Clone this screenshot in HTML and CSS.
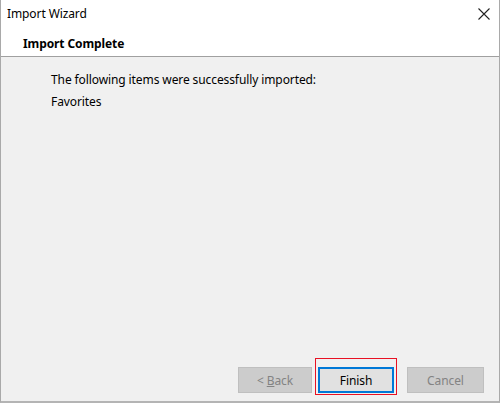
FILE: index.html
```html
<!DOCTYPE html>
<html>
<head>
<meta charset="utf-8">
<link rel="stylesheet" href="styles.css">
</head>
<body>
<div class="window">
  <div class="header">
    <div class="titlebar">
      <span class="title">Import Wizard</span>
      <svg class="close" width="12" height="12" viewBox="0 0 12 12"><path d="M0.5 0.5 L11.5 11.5 M11.5 0.5 L0.5 11.5" stroke="#222" stroke-width="1.1" fill="none"/></svg>
    </div>
    <div class="heading">Import Complete</div>
  </div>
  <div class="content">
    <p class="line">The following items were successfully imported:</p>
    <p class="line">Favorites</p>
  </div>
  <div class="footer">
    <button class="btn disabled">&lt; <u>B</u>ack</button>
    <div class="finish-wrap">
      <button class="btn primary">Finish</button>
      <span class="highlight"></span>
    </div>
    <button class="btn disabled cancel">Cancel</button>
  </div>
</div>
</body>
</html>
```

FILE: styles.css
```css
html, body {
  margin: 0;
  padding: 0;
  background: #f0f0f0;
}
body {
  font-family: "Noto Sans", "Open Sans", sans-serif;
  font-size: 12px;
  letter-spacing: -0.1px;
  color: #000;
}
.window {
  width: 500px;
  height: 403px;
  box-sizing: border-box;
  border-left: 1px solid #a9a9a9;
  border-right: 1px solid #a9a9a9;
  border-bottom: 2px solid #b4b4b4;
  display: flex;
  flex-direction: column;
  background: #f0f0f0;
}
.header {
  background: #fff;
  height: 56px;
  border-bottom: 1px solid #a0a0a0;
  flex: none;
}
.titlebar {
  height: 28px;
  display: flex;
  align-items: center;
  justify-content: space-between;
  padding: 0 9px 0 6px;
}
.title {
  font-size: 12px;
  line-height: 16px;
}
.close {
  display: block;
}
.heading {
  padding-left: 22px;
  font-weight: bold;
  font-size: 12px;
  line-height: 16px;
  margin-top: 8px;
}
.content {
  flex: 1;
  padding: 15px 0 0 50px;
}
.line {
  margin: 0 0 6px;
  line-height: 16px;
}
.footer {
  display: flex;
  align-items: center;
  padding: 0 14px 7px 237px;
  height: 35px;
  box-sizing: border-box;
  flex: none;
}
.btn {
  font-family: "Noto Sans", "Open Sans", sans-serif;
  font-size: 12px;
  letter-spacing: -0.1px;
  height: 26px;
  box-sizing: border-box;
  padding: 0;
  margin: 0;
}
.disabled {
  width: 74px;
  background: #cccccc;
  border: 1px solid #bfbfbf;
  color: #838383;
}
.disabled u {
  text-decoration: underline;
}
.finish-wrap {
  position: relative;
  margin-left: 6px;
}
.primary {
  display: block;
  width: 76px;
  background: #e1e1e1;
  border: 2px solid #0078d7;
  color: #000;
}
.highlight {
  position: absolute;
  left: -3px;
  top: -9px;
  width: 82px;
  height: 37px;
  border: 1px solid #e81123;
  box-sizing: border-box;
}
.cancel {
  margin-left: 13px;
  width: 77px;
}
```
